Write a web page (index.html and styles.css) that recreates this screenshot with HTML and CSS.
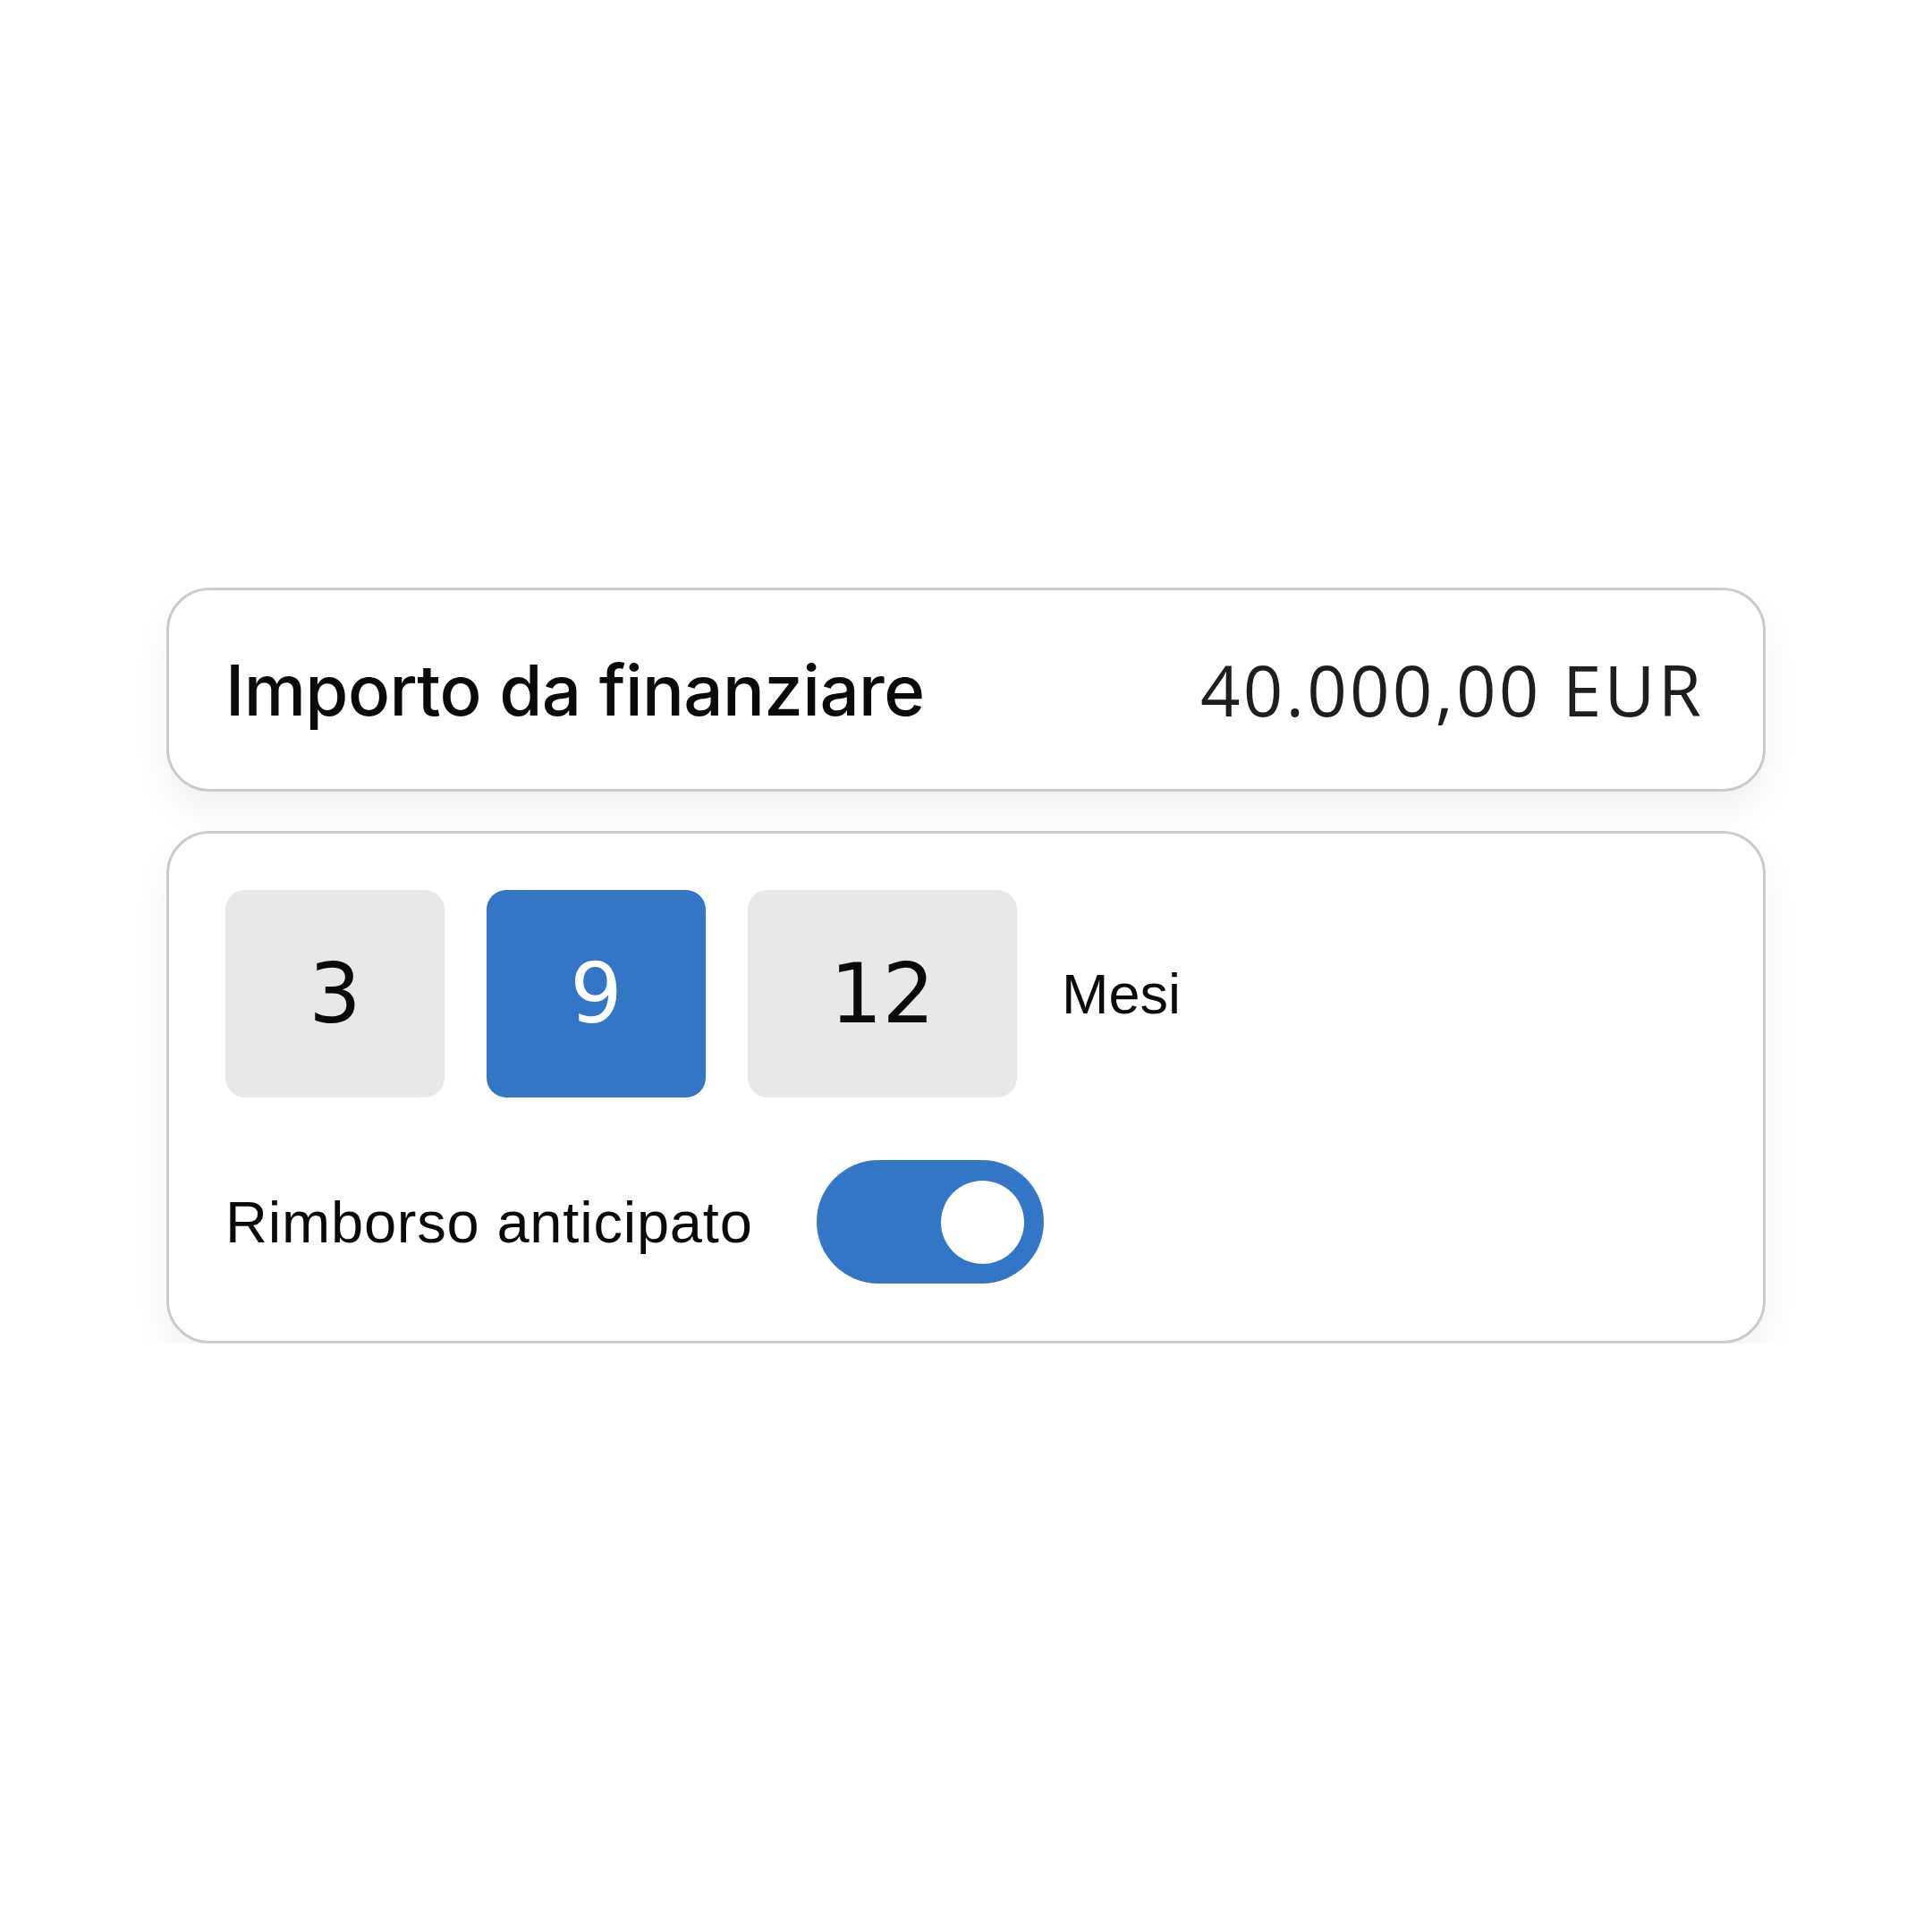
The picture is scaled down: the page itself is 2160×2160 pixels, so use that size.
FILE: index.html
```html
<!DOCTYPE html>
<html lang="it">
<head>
  <meta charset="UTF-8" />
  <meta name="viewport" content="width=device-width, initial-scale=1.0"/>
  <title>Finanziamento</title>
  <link rel="stylesheet" href="styles.css">
</head>
<body>

  <main class="wrap">
    <section class="card amount">
      <span class="amount-label">Importo da finanziare</span>
      <span class="amount-value">40.000,00 EUR</span>
    </section>

    <section class="card options">
      <div class="months">
        <button class="month">3</button>
        <button class="month active">9</button>
        <button class="month wide">12</button>
        <span class="months-unit">Mesi</span>
      </div>

      <div class="early">
        <span class="early-label">Rimborso anticipato</span>
        <span class="switch on"><span class="knob"></span></span>
      </div>
    </section>
  </main>

</body>
</html>
```

FILE: styles.css
```css
body {
  margin: 0;
  background: #fff;
  font-family: Inter, "Liberation Sans", sans-serif;
  color: #0a0a0a;
}
.wrap {
  width: 1788px;
  margin: 0 auto;
  padding-top: 657px;
  display: flex;
  flex-direction: column;
  gap: 44px;
}
.card {
  box-sizing: border-box;
  background: #fff;
  border: 3px solid #cbcbcb;
  border-radius: 48px;
  box-shadow: 0 22px 44px rgba(0, 0, 0, 0.06);
}
.amount {
  height: 228px;
  padding: 0 66px 0 63px;
  display: flex;
  align-items: center;
  justify-content: space-between;
}
.amount-label {
  font-size: 78px;
  font-weight: 500;
  letter-spacing: -0.6px;
}
.amount-value {
  font-family: "Open Sans", sans-serif;
  font-size: 78px;
  letter-spacing: 3.2px;
  color: #1e1e1e;
}
.options {
  padding: 63px 63px 64px;
  display: flex;
  flex-direction: column;
  gap: 70px;
}
.months {
  display: flex;
  align-items: center;
  gap: 47px;
}
.month {
  width: 245px;
  height: 232px;
  border: none;
  border-radius: 22px;
  background: #e8e8e8;
  color: #0a0a0a;
  font-family: "DejaVu Sans", sans-serif;
  font-size: 92px;
  padding: 0;
  cursor: pointer;
}
.month.wide {
  width: 301px;
}
.month.active {
  background: #3476c6;
  color: #fff;
}
.months-unit {
  margin-left: 3px;
  font-family: "Liberation Sans", Arial, sans-serif;
  font-size: 63px;
}
.early {
  display: flex;
  align-items: center;
  gap: 71px;
}
.early-label {
  font-family: "Liberation Sans", Arial, sans-serif;
  font-size: 65px;
  letter-spacing: 0.8px;
}
.switch {
  box-sizing: border-box;
  width: 254px;
  height: 138px;
  border-radius: 69px;
  background: #e8e8e8;
  display: flex;
  align-items: center;
  padding: 0 22px;
}
.switch.on {
  background: #3476c6;
  justify-content: flex-end;
}
.knob {
  width: 93px;
  height: 93px;
  border-radius: 50%;
  background: #fff;
}
```
